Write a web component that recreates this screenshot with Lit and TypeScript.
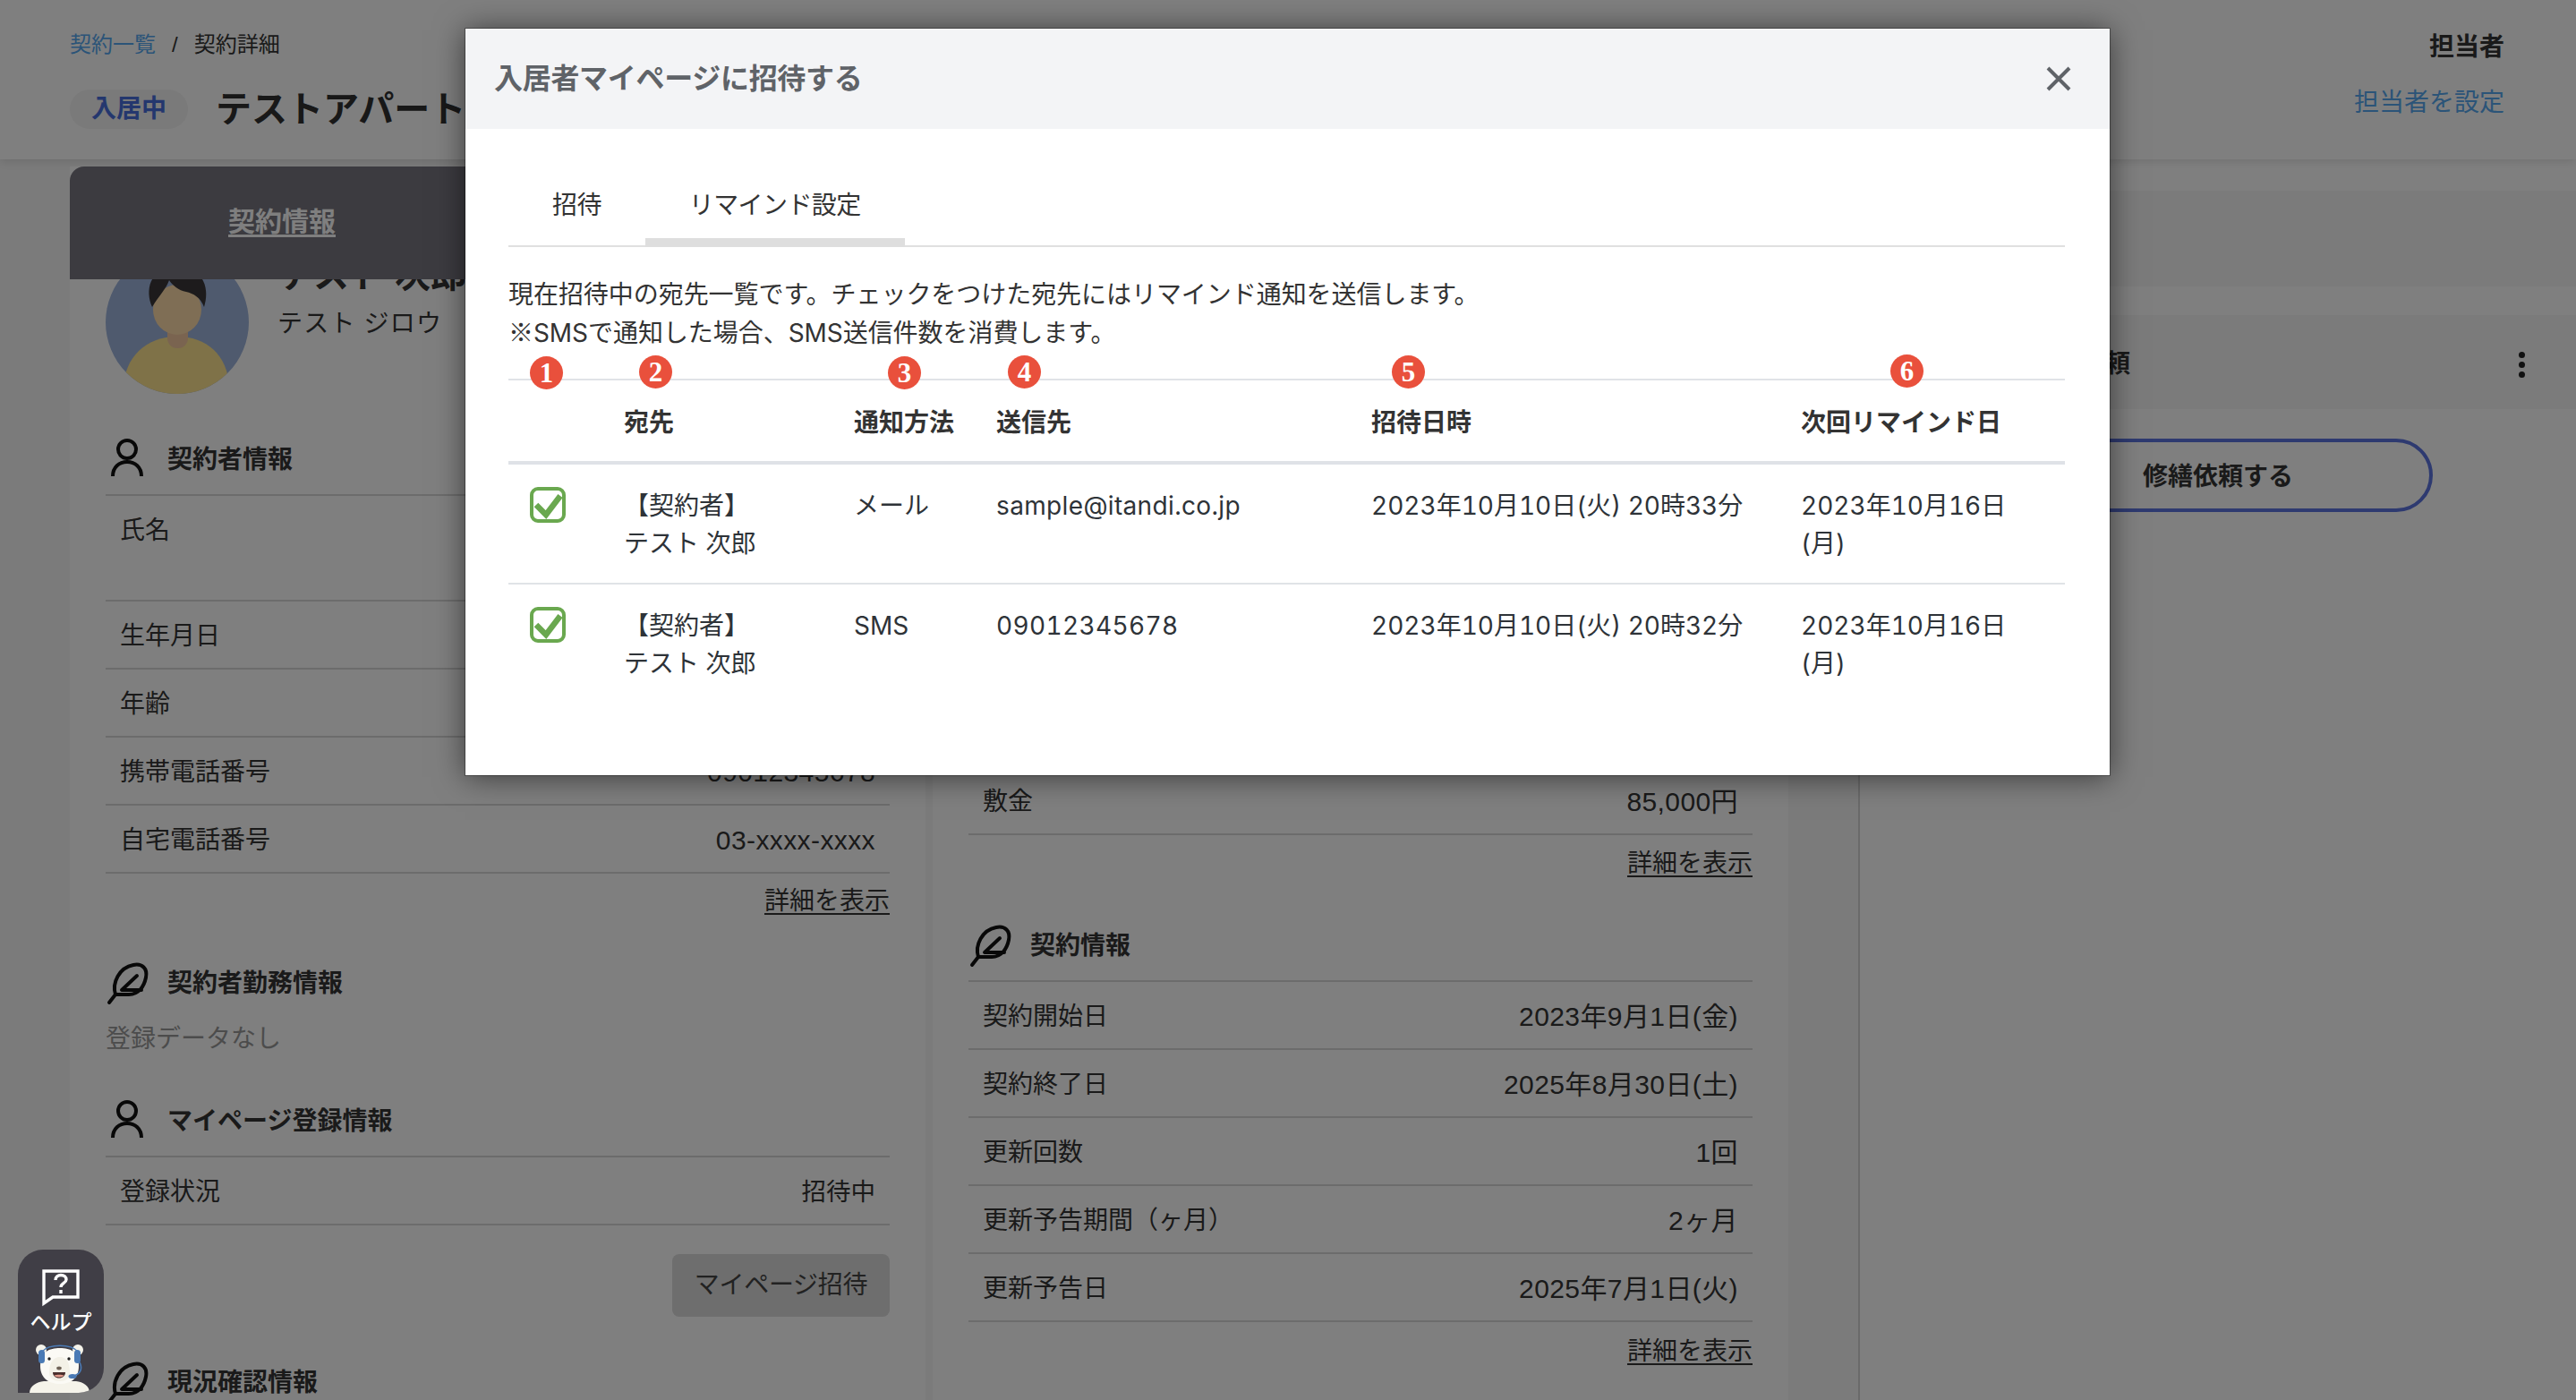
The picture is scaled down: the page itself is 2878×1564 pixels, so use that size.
import { LitElement, html, css } from 'lit';
import { customElement } from 'lit/decorators.js';

const personIcon = html`<svg class="sec-icon" width="46" height="44" viewBox="-2 0 46 44" fill="none" stroke="currentColor" stroke-width="4">
  <circle cx="22" cy="12" r="10"></circle>
  <path d="M6 42 C6 32 13 26 22 26 C31 26 38 32 38 42"></path>
</svg>`;

const featherIcon = html`<svg class="sec-icon feather" width="46" height="46" viewBox="-2 0 46 46" fill="none" stroke="currentColor" stroke-width="4" stroke-linecap="round" stroke-linejoin="round">
  <path d="M2 44 L9 35"></path>
  <path d="M9 35 C5 22 13 5 29 2 C39 0 45 6 43 16 C41 26 35 35 24 35 Z"></path>
  <path d="M33 14 L16 30 H38"></path>
</svg>`;

const checkIcon = html`<svg class="check" width="40" height="40" viewBox="0 0 40 40" fill="none">
  <rect x="2" y="2" width="36" height="36" rx="7" stroke="#6aa84f" stroke-width="4"></rect>
  <path d="M7 20 L18 31 L34 10" stroke="#6aa84f" stroke-width="6.500"></path>
</svg>`;

const avatar = html`<svg class="avatar" width="160" height="160" viewBox="0 0 160 160">
  <defs><clipPath id="av"><circle cx="80" cy="80" r="80"></circle></clipPath></defs>
  <g clip-path="url(#av)">
    <rect width="160" height="160" fill="#9eb4dc"></rect>
    <path d="M20 160 C18 120 45 96 80 96 C115 96 140 120 138 160 Z" fill="#fee490"></path>
    <rect x="69" y="80" width="23" height="29" rx="11" fill="#f4c8a0"></rect>
    <ellipse cx="80" cy="66" rx="27" ry="28" fill="#fedcaa"></ellipse>
    <path d="M52 63 C44 45 48 20 80 15 C112 20 116 45 110 63 C106 52 98 48 90 46 C82 45 74 38 71 33 C68 42 60 50 52 63 Z" fill="#3a3638"></path>
  </g>
</svg>`;

const bear = html`<svg class="bear" width="68" height="54" viewBox="0 0 68 54">
  <path d="M0 54 C0 46 8 42 16 41 L52 41 C60 42 67 46 67 54 Z" fill="#f5f3ea"></path>
  <circle cx="13" cy="6" r="6" fill="#f5f3ea"></circle>
  <circle cx="54" cy="6" r="6" fill="#f5f3ea"></circle>
  <path d="M12 24 C12 8 22 4 34 4 C46 4 55 8 55 24 C55 38 46 44 34 44 C22 44 12 38 12 24 Z" fill="#fbfaf5"></path>
  <path d="M22 32 C22 18 28 14 34 14 C40 14 45 18 45 32 C45 38 40 41 34 41 C28 41 22 38 22 32 Z" fill="#f3f1e7"></path>
  <path d="M14 8 C22 -1 46 -1 54 8" fill="none" stroke="#4a7ab5" stroke-width="1.6"></path>
  <rect x="10" y="6" width="7" height="15" rx="3.500" fill="#4a7ab5"></rect>
  <rect x="50" y="6" width="7" height="15" rx="3.500" fill="#4a7ab5"></rect>
  <path d="M56 20 C59 26 58 32 50 35" fill="none" stroke="#4a7ab5" stroke-width="1.6"></path>
  <ellipse cx="48" cy="35.500" rx="4.500" ry="2.600" fill="#4a7ab5"></ellipse>
  <circle cx="22" cy="16" r="1.7" fill="#222"></circle>
  <circle cx="44" cy="16" r="1.7" fill="#222"></circle>
  <ellipse cx="33" cy="26.500" rx="2.800" ry="1.900" fill="#6e6256"></ellipse>
  <path d="M26 31 L40 31 C40 35 37 37.500 33 37.500 C29 37.500 26 35 26 31 Z" fill="#4a2f2c"></path>
  <path d="M27.500 34.500 C30 33.500 36 33.500 38.500 34.500 C37 37 29 37 27.500 34.500 Z" fill="#e39a8b"></path>
</svg>`;

const contractRows = [
  ['契約開始日', '2023年9月1日(金)'],
  ['契約終了日', '2025年8月30日(土)'],
  ['更新回数', '1回'],
  ['更新予告期間（ヶ月）', '2ヶ月'],
  ['更新予告日', '2025年7月1日(火)'],
];

const tenantRows = [
  ['生年月日', '1990年1月1日'],
  ['年齢', '33歳'],
  ['携帯電話番号', '09012345678'],
  ['自宅電話番号', '03-xxxx-xxxx'],
];

const invites = [
  { method: 'メール', dest: 'sample@itandi.co.jp', at: '2023年10月10日(火) 20時33分' },
  { method: 'SMS', dest: '09012345678', at: '2023年10月10日(火) 20時32分' },
];

// annotation marks laid over the table head, offsets from the table's top-left
const marks = [
  { n: 1, x: 24, y: -27 },
  { n: 2, x: 146, y: -28 },
  { n: 3, x: 424, y: -27 },
  { n: 4, x: 558, y: -28 },
  { n: 5, x: 987, y: -28 },
  { n: 6, x: 1544, y: -29 },
];

@customElement('app-root')
export class AppRoot extends LitElement {
  static styles = css`
    :host {
      display: block;
      position: relative;
      width: 2878px;
      height: 1564px;
      overflow: hidden;
      background: #f6f6f6;
      color: #343434;
      font-family: "Liberation Sans", "Noto Sans CJK JP", sans-serif;
      font-size: 28px;
      line-height: 42px;
    }
    /* page behind the dialog */
    .top {
      display: flex;
      justify-content: space-between;
      height: 178px;
      box-sizing: border-box;
      padding: 32px 80px 0 78px;
      background: #fff;
      box-shadow: 0 2px 10px rgba(0, 0, 0, 0.12);
      position: relative;
    }
    .crumbs { font-size: 24px; line-height: 36px; display: flex; gap: 18px; }
    .link { color: #56a8f0; }
    .title-row { display: flex; align-items: center; gap: 31px; margin-top: 32px; height: 44px; }
    .badge {
      width: 132px;
      height: 44px;
      border-radius: 22px;
      background: #f4f4f4;
      color: #486edd;
      font-weight: 700;
      text-align: center;
      line-height: 44px;
    }
    .title-row h1 { margin: 0; font-size: 40px; line-height: 44px; color: #303030; white-space: nowrap; }
    .staff { display: flex; flex-direction: column; align-items: flex-end; gap: 20px; }
    .staff b { line-height: 42px; }
    .main { display: flex; height: 1386px; }
    .card { width: 956px; box-sizing: border-box; margin-top: 8px; padding: 0 40px; background: #fff; position: relative; }
    .card.left { margin-left: 78px; padding-top: 94px; }
    .card.mid { margin-left: 8px; padding-top: 671px; }
    .tab {
      position: absolute;
      left: 0;
      top: 0;
      width: 100%;
      height: 126px;
      background: #787680;
      border-radius: 16px 0 0 0;
    }
    .tab span {
      display: block;
      width: 474px;
      text-align: center;
      color: #fff;
      font-size: 30px;
      font-weight: 700;
      line-height: 124px;
      text-decoration: underline;
      text-underline-offset: 4px;
    }
    .person { display: flex; gap: 32px; height: 160px; }
    .names b { display: block; font-size: 40px; line-height: 50px; margin-top: 2px; }
    .names span { display: block; line-height: 42px; margin-top: 9px; letter-spacing: 1.2px; }
    .sec { display: flex; align-items: center; height: 80px; font-weight: 700; }
    .sec span { padding-top: 4px; }
    .sec-icon { flex: none; color: #111; margin-right: 23px; overflow: visible; }
    .feather { margin-top: 3px; }
    .rows { border-top: 2px solid #d8d8d8; }
    .row {
      display: flex;
      justify-content: space-between;
      box-sizing: border-box;
      height: 76px;
      padding: 18px 16px 0;
      border-bottom: 2px solid #d8d8d8;
      white-space: nowrap;
    }
    .row.tall { height: 118px; }
    .row .val { font-size: 30px; letter-spacing: 0.4px; }
    .row .val.jp { font-size: 27.500px; letter-spacing: 0; }
    .more { display: flex; justify-content: flex-end; height: 42px; text-decoration: underline; text-underline-offset: 4px; }
    .none { color: #999; margin-top: 3px; }
    .invite-btn {
      display: flex;
      justify-content: flex-end;
      margin-top: 32px;
    }
    .invite-btn button {
      width: 243px;
      height: 70px;
      border: 0;
      border-radius: 8px;
      background: #dcdcdc;
      color: #444;
      font: inherit;
      letter-spacing: -0.3px;
    }
    .side { flex: 1; margin-left: 78px; border-left: 2px solid #d4d4d4; background: #fff; }
    .band { height: 107px; background: #f6f6f6; }
    .band.first { margin-top: 35px; }
    .band.second {
      height: 105px;
      margin-top: 32px;
      display: flex;
      align-items: center;
      justify-content: space-between;
      box-sizing: border-box;
      padding: 5px 57px 0 190px;
      font-weight: 700;
    }
    .kebab { display: flex; flex-direction: column; gap: 4px; }
    .kebab i { width: 7px; height: 7px; border-radius: 50%; background: #222; }
    .pill {
      display: block;
      width: 480px;
      height: 82px;
      box-sizing: border-box;
      margin: 33px auto 0;
      padding-top: 5px;
      border: 4px solid #5c74e0;
      border-radius: 41px;
      background: #fff;
      color: #343434;
      font: inherit;
      font-weight: 700;
    }
    /* overlay and dialog */
    .overlay { position: absolute; inset: 0; background: rgba(0, 0, 0, 0.5); }
    .modal {
      position: absolute;
      left: 520px;
      top: 32px;
      width: 1837px;
      height: 834px;
      background: #fff;
      box-shadow: 0 0 0 1px rgba(0, 0, 0, 0.3), 0 2px 32px rgba(0, 0, 0, 0.55);
      font-family: "Inter", "Noto Sans CJK JP", sans-serif;
      font-variant-numeric: tabular-nums;
      color: #2e3338;
    }
    .m-head {
      display: flex;
      align-items: center;
      justify-content: space-between;
      height: 112px;
      padding: 0 43px 0 32px;
      background: #f3f4f6;
    }
    .m-head h2 { margin: 0; font-size: 32px; letter-spacing: -0.3px; font-weight: 700; color: #5f6368; }
    .m-body { padding: 40px 50px 0 48px; }
    .tabs { display: flex; height: 92px; box-sizing: border-box; border-bottom: 2px solid #e0e0e0; }
    .tabs div {
      height: 92px;
      box-sizing: border-box;
      padding: 24px 49px 16px;
      color: #333;
      letter-spacing: -0.6px;
    }
    .tabs div.on { border-bottom: 10px solid #dedede; }
    .desc { margin: 32px 0 0; line-height: 43px; color: #333; letter-spacing: -0.05px; }
    .kome { font-family: "Noto Sans CJK JP", sans-serif; line-height: 0; }
    .table { position: relative; margin-top: 29px; border-top: 2px solid #e0e3e7; }
    .tr { display: grid; grid-template-columns: 129px 257px 159px 419px 480px 295px; }
    .tr.h { height: 90px; box-sizing: content-box; align-items: center; font-weight: 700; color: #333; border-bottom: 4px solid #dfe2e7; }
    .tr.h > div { padding-top: 3px; }
    .tr.d { padding: 25px 0 23px; }
    .tr.d + .tr.d { border-top: 2px solid #e0e3e7; }
    .tr.d > div { padding-right: 30px; }
    .tr.d .dest { letter-spacing: 0.35px; }
    .check { display: block; margin: 0 0 0 24px; }
    .mark {
      position: absolute;
      width: 37px;
      height: 37px;
      border-radius: 50%;
      background: #e9503c;
      color: #fff;
      font-family: "Liberation Serif", serif;
      font-weight: 700;
      font-size: 31px;
      line-height: 37px;
      text-align: center;
    }
    /* help launcher sits above the overlay */
    .help {
      position: absolute;
      left: 20px;
      top: 1396px;
      width: 96px;
      height: 160px;
      background: #403e46;
      border-radius: 28px 28px 28px 0;
      color: #fff;
      overflow: hidden;
    }
    .help .q { display: block; margin: 22px 0 0 27px; }
    .help span {
      display: block;
      text-align: center;
      font-size: 23px;
      font-weight: 500;
      line-height: 30px;
      font-family: "Noto Sans CJK JP", sans-serif;
    }
    .bear { position: absolute; left: 13px; top: 106px; }
  `;

  rows(list: string[][]) {
    return list.map(([k, v]) => html`<div class="row"><span>${k}</span><span class="val">${v}</span></div>`);
  }

  render() {
    return html`
      <div class="top">
        <div>
          <div class="crumbs"><span class="link">契約一覧</span><span>/</span><span>契約詳細</span></div>
          <div class="title-row">
            <div class="badge">入居中</div>
            <h1>テストアパート</h1>
          </div>
        </div>
        <div class="staff">
          <b>担当者</b>
          <span class="link">担当者を設定</span>
        </div>
      </div>

      <div class="main">
        <section class="card left">
          <div class="tab"><span>契約情報</span></div>
          <div class="person">
            ${avatar}
            <div class="names"><b>テスト 次郎</b><span>テスト ジロウ</span></div>
          </div>
          <div class="sec" style="margin-top:32px">${personIcon}<span>契約者情報</span></div>
          <div class="rows">
            <div class="row tall"><span>氏名</span><span>テスト 次郎</span></div>
            ${this.rows(tenantRows)}
          </div>
          <div class="more" style="margin-top:10px">詳細を表示</div>
          <div class="sec" style="margin-top:29px">${featherIcon}<span>契約者勤務情報</span></div>
          <div class="none">登録データなし</div>
          <div class="sec" style="margin-top:29px">${personIcon}<span>マイページ登録情報</span></div>
          <div class="rows"><div class="row"><span>登録状況</span><span class="val jp">招待中</span></div></div>
          <div class="invite-btn"><button>マイページ招待</button></div>
          <div class="sec" style="margin-top:32px">${featherIcon}<span>現況確認情報</span></div>
        </section>

        <section class="card mid">
          <div class="row"><span>敷金</span><span class="val">85,000円</span></div>
          <div class="more" style="margin-top:11px">詳細を表示</div>
          <div class="sec" style="margin-top:29px">${featherIcon}<span>契約情報</span></div>
          <div class="rows">${this.rows(contractRows)}</div>
          <div class="more" style="margin-top:12px">詳細を表示</div>
        </section>

        <aside class="side">
          <div class="band first"></div>
          <div class="band second">
            <span>修繕依頼</span>
            <div class="kebab"><i></i><i></i><i></i></div>
          </div>
          <button class="pill">修繕依頼する</button>
        </aside>
      </div>

      <div class="overlay"></div>

      <div class="modal">
        <div class="m-head">
          <h2>入居者マイページに招待する</h2>
          <svg width="28" height="28" viewBox="0 0 28 28" stroke="#5f6368" stroke-width="4" fill="none">
            <path d="M2 2 L26 26 M26 2 L2 26"></path>
          </svg>
        </div>
        <div class="m-body">
          <div class="tabs">
            <div>招待</div>
            <div class="on">リマインド設定</div>
          </div>
          <p class="desc">現在招待中の宛先一覧です。チェックをつけた宛先にはリマインド通知を送信します。<br /><span class="kome">※</span>SMSで通知した場合、SMS送信件数を消費します。</p>
          <div class="table">
            <div class="tr h">
              <div></div><div>宛先</div><div>通知方法</div><div>送信先</div><div>招待日時</div><div>次回リマインド日</div>
            </div>
            ${invites.map(
              (r) => html`<div class="tr d">
                <div>${checkIcon}</div>
                <div>【契約者】<br />テスト 次郎</div>
                <div>${r.method}</div>
                <div class="dest">${r.dest}</div>
                <div>${r.at}</div>
                <div>2023年10月16日(月)</div>
              </div>`,
            )}
            ${marks.map(
              (m) => html`<div class="mark" style="left:${m.x}px;top:${m.y}px">${m.n}</div>`,
            )}
          </div>
        </div>
      </div>

      <div class="help">
        <svg class="q" width="42" height="42" viewBox="0 0 42 42" fill="none" stroke="#fff" stroke-width="3.400">
          <path d="M2 2 H40 V31 H12 L2 38 Z"></path>
          <path d="M15 12 C15 8 18 6.500 21 6.500 C24.500 6.500 27 8.500 27 11.500 C27 15.500 21 15.500 21 20"></path>
          <path d="M21 23 V27"></path>
        </svg>
        <span>ヘルプ</span>
        ${bear}
      </div>
    `;
  }
}
